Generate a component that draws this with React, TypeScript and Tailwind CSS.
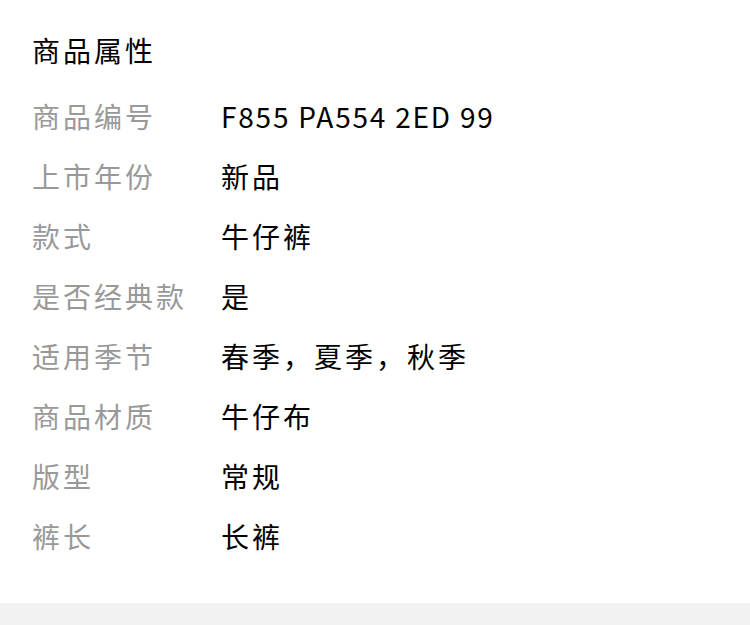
const attrs = [
  { label: '商品编号', value: 'F855 PA554 2ED 99', latin: true },
  { label: '上市年份', value: '新品' },
  { label: '款式', value: '牛仔裤' },
  { label: '是否经典款', value: '是' },
  { label: '适用季节', value: '春季，夏季，秋季' },
  { label: '商品材质', value: '牛仔布' },
  { label: '版型', value: '常规' },
  { label: '裤长', value: '长裤' },
];

export default function App() {
  return (
    <div className="w-[750px] min-h-[625px] bg-white font-['Noto_Sans_CJK_SC',sans-serif] text-[28px] tracking-[3px]">
      <div className="px-[32px] pt-[20px] pb-[37px]">
        <h2 className="h-[60px] leading-[60px] text-black font-normal">商品属性</h2>
        <div className="mt-[6px] flex flex-col">
          {attrs.map((a) => (
            <div key={a.label} className="flex h-[60px] items-center leading-[60px]">
              <span className="w-[189px] shrink-0 text-[#999999]">{a.label}</span>
              <span className={a.latin ? 'text-black tracking-[1.8px]' : 'text-black'}>{a.value}</span>
            </div>
          ))}
        </div>
      </div>
      <div className="h-[40px] bg-[#f2f2f2]" />
    </div>
  );
}
